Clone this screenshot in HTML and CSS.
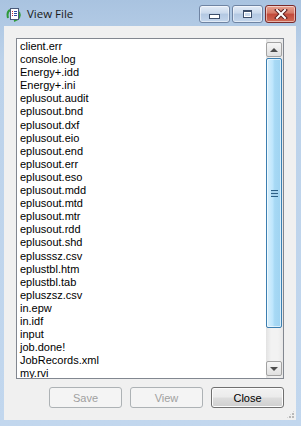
FILE: index.html
```html
<!DOCTYPE html>
<html lang="en">
<head>
    <meta charset="UTF-8">
    <title>View File</title>
    <link rel="stylesheet" href="styles.css">
</head>
<body>
    <div class="window">
        <div class="titlebar">
            <svg class="app-icon" width="16" height="16" viewBox="0 0 16 16">
                <path d="M2 11 C1 7 2 4 4 3" fill="none" stroke="#2f9a3a" stroke-width="2"/>
                <path d="M13 5 C15 9 13 13 8 14" fill="none" stroke="#2f9a3a" stroke-width="2"/>
                <rect x="4.5" y="1.5" width="8" height="11" fill="#fff" stroke="#4a5a7a"/>
                <rect x="6" y="4" width="1" height="1" fill="#c03030"/>
                <rect x="6" y="6" width="1" height="1" fill="#c03030"/>
                <rect x="6" y="8" width="1" height="1" fill="#c03030"/>
                <rect x="8" y="4" width="3" height="1" fill="#3050a0"/>
                <rect x="8" y="6" width="3" height="1" fill="#3050a0"/>
                <rect x="8" y="8" width="3" height="1" fill="#3050a0"/>
            </svg>
            <span class="title">View File</span>
            <div class="caption-buttons">
                <div class="cap-btn"><span class="min-glyph"></span></div>
                <div class="cap-btn"><span class="max-glyph"></span></div>
                <div class="cap-btn close-btn">
                    <svg width="14" height="10" viewBox="0 0 14 10">
                        <path d="M3 1 L11 9 M11 1 L3 9" stroke="#5a2020" stroke-width="4" stroke-linecap="square"/>
                        <path d="M3 1 L11 9 M11 1 L3 9" stroke="#fff" stroke-width="2" stroke-linecap="square"/>
                    </svg>
                </div>
            </div>
        </div>
        <div class="client">
            <div class="listbox">
                <ul class="items">
                    <li>client.err</li>
                    <li>console.log</li>
                    <li>Energy+.idd</li>
                    <li>Energy+.ini</li>
                    <li>eplusout.audit</li>
                    <li>eplusout.bnd</li>
                    <li>eplusout.dxf</li>
                    <li>eplusout.eio</li>
                    <li>eplusout.end</li>
                    <li>eplusout.err</li>
                    <li>eplusout.eso</li>
                    <li>eplusout.mdd</li>
                    <li>eplusout.mtd</li>
                    <li>eplusout.mtr</li>
                    <li>eplusout.rdd</li>
                    <li>eplusout.shd</li>
                    <li>eplusssz.csv</li>
                    <li>eplustbl.htm</li>
                    <li>eplustbl.tab</li>
                    <li>epluszsz.csv</li>
                    <li>in.epw</li>
                    <li>in.idf</li>
                    <li>input</li>
                    <li>job.done!</li>
                    <li>JobRecords.xml</li>
                    <li>my.rvi</li>
                </ul>
                <div class="scrollbar">
                    <div class="arrow-btn"><span class="arrow-up"></span></div>
                    <div class="track">
                        <div class="thumb">
                            <span class="grip"></span>
                        </div>
                    </div>
                    <div class="arrow-btn"><span class="arrow-down"></span></div>
                </div>
            </div>
            <div class="button-row">
                <button class="btn" disabled>Save</button>
                <button class="btn" disabled>View</button>
                <button class="btn">Close</button>
            </div>
            <div class="size-grip"></div>
        </div>
    </div>
</body>
</html>
```

FILE: styles.css
```css
body {
    margin: 0;
    padding: 0;
    font-family: "Liberation Sans", Arial, sans-serif;
}

.window {
    width: 301px;
    height: 426px;
    box-sizing: border-box;
    background: linear-gradient(to bottom, #a9c3e0 0px, #bcd2ea 60px, #c2d7ee 100%);
    display: flex;
    flex-direction: column;
    padding: 0 5px 6px 4px;
}

.titlebar {
    height: 26px;
    display: flex;
    align-items: flex-start;
}

.app-icon {
    margin: 7px 0 0 2px;
}

.title {
    font-family: "Open Sans", "DejaVu Sans", sans-serif;
    font-size: 11.5px;
    color: #1a1a1a;
    margin: 6px 0 0 5px;
}

.caption-buttons {
    margin-left: auto;
    margin-top: 5px;
    display: flex;
    gap: 2px;
    margin-right: 0;
}

.cap-btn {
    width: 29px;
    height: 16px;
    border: 1px solid #6f84a3;
    border-radius: 3px;
    background: linear-gradient(to bottom, #e4ecf7 0%, #cad9ec 45%, #b3c8e2 50%, #c4d6ec 100%);
    box-shadow: inset 0 0 0 1px rgba(255, 255, 255, 0.5);
    display: flex;
    align-items: center;
    justify-content: center;
}

.close-btn {
    border-color: #7a2a2a;
    background: linear-gradient(to bottom, #e8a291 0%, #d47866 45%, #c2493a 50%, #d06a55 100%);
}

.min-glyph {
    width: 9px;
    height: 3px;
    border: 1px solid #3c4e6a;
    background: #fff;
    margin-top: 5px;
}

.max-glyph {
    width: 7px;
    height: 5px;
    border: 1px solid #3c4e6a;
    border-top-width: 2px;
    background: #cad9ec;
    box-shadow: 0 0 0 1px #fff inset;
}

.client {
    flex: 1;
    background-color: #f0f0f0;
    display: flex;
    flex-direction: column;
    padding: 12px 12px 0 12px;
    position: relative;
}

.listbox {
    height: 341px;
    box-sizing: border-box;
    border: 1px solid #828790;
    background: #fff;
    display: flex;
}

.items {
    flex: 1;
    list-style: none;
    margin: 0;
    padding: 1px 0 0 3px;
    overflow: hidden;
    font-size: 11px;
    line-height: 13.1px;
    color: #000;
}

.scrollbar {
    width: 17px;
    display: flex;
    flex-direction: column;
    background: linear-gradient(to right, #e2e2e2, #f2f2f2 30%, #f2f2f2 70%, #e8e8e8);
    padding: 3px 1px 2px 0;
    box-sizing: border-box;
}

.arrow-btn {
    height: 13px;
    border: 1px solid #a2a2a2;
    border-radius: 2px;
    background: linear-gradient(to bottom, #f6f6f6, #e0e0e0);
    display: flex;
    align-items: center;
    justify-content: center;
}

.arrow-up {
    width: 0;
    height: 0;
    border-left: 4px solid transparent;
    border-right: 4px solid transparent;
    border-bottom: 4px solid #4d4d4d;
}

.arrow-down {
    width: 0;
    height: 0;
    border-left: 4px solid transparent;
    border-right: 4px solid transparent;
    border-top: 4px solid #4d4d4d;
}

.track {
    flex: 1;
    padding: 1px 0;
}

.thumb {
    height: 268px;
    border: 1px solid #3c7fb1;
    border-radius: 2px;
    background: linear-gradient(to right, #d9f0fc 0%, #bee6fd 40%, #a7d9f5 55%, #9fd3f1 100%);
    box-shadow: inset 0 0 0 1px rgba(255, 255, 255, 0.6);
    display: flex;
    align-items: center;
    justify-content: center;
}

.grip {
    width: 7px;
    height: 7px;
    background: repeating-linear-gradient(to bottom, #2b5f86 0px, #2b5f86 1px, #a7d3ee 1px, #a7d3ee 3px);
}

.button-row {
    display: flex;
    justify-content: flex-end;
    gap: 8px;
    margin-top: 8px;
}

.btn {
    width: 73px;
    height: 21px;
    font-family: "Liberation Sans", Arial, sans-serif;
    font-size: 11px;
    color: #000;
    border: 1px solid #707070;
    border-radius: 3px;
    background: linear-gradient(to bottom, #f2f2f2 0%, #ebebeb 48%, #dddddd 52%, #cfcfcf 100%);
    box-shadow: inset 0 0 0 1px #fcfcfc;
    padding: 0;
}

.btn:disabled {
    color: #a0a0a0;
    border-color: #adb2b5;
    background: #f4f4f4;
    box-shadow: none;
}

.size-grip {
    position: absolute;
    right: 1px;
    bottom: 1px;
    width: 9px;
    height: 9px;
    background:
        radial-gradient(circle at 1px 1px, #b8b8b8 0.8px, transparent 1.2px) 0 0 / 3px 3px;
    clip-path: polygon(100% 0, 100% 100%, 0 100%);
}
```
